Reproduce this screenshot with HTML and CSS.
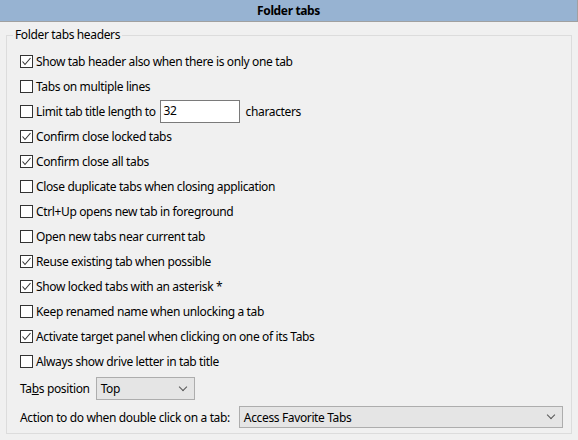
FILE: index.html
```html
<!DOCTYPE html>
<html>
<head>
<meta charset="utf-8">
<link rel="stylesheet" href="styles.css">
</head>
<body>
<div class="header">Folder tabs</div>
<div class="group">
  <div class="legend">Folder tabs headers</div>
  <div class="row"><span class="cb"><svg viewBox="0 0 11 11"><polyline points="1.5,5.5 4,8.5 9.5,2"/></svg></span><span>Show tab header also when there is only one tab</span></div>
  <div class="row"><span class="cb"></span><span>Tabs on multiple lines</span></div>
  <div class="row"><span class="cb"></span><span>Limit tab title length to</span><span class="edit">32</span><span class="chars">characters</span></div>
  <div class="row"><span class="cb"><svg viewBox="0 0 11 11"><polyline points="1.5,5.5 4,8.5 9.5,2"/></svg></span><span>Confirm close locked tabs</span></div>
  <div class="row"><span class="cb"><svg viewBox="0 0 11 11"><polyline points="1.5,5.5 4,8.5 9.5,2"/></svg></span><span>Confirm close all tabs</span></div>
  <div class="row"><span class="cb"></span><span>Close duplicate tabs when closing application</span></div>
  <div class="row"><span class="cb"></span><span>Ctrl+Up opens new tab in foreground</span></div>
  <div class="row"><span class="cb"></span><span>Open new tabs near current tab</span></div>
  <div class="row"><span class="cb"><svg viewBox="0 0 11 11"><polyline points="1.5,5.5 4,8.5 9.5,2"/></svg></span><span>Reuse existing tab when possible</span></div>
  <div class="row"><span class="cb"><svg viewBox="0 0 11 11"><polyline points="1.5,5.5 4,8.5 9.5,2"/></svg></span><span>Show locked tabs with an asterisk *</span></div>
  <div class="row"><span class="cb"></span><span>Keep renamed name when unlocking a tab</span></div>
  <div class="row"><span class="cb"><svg viewBox="0 0 11 11"><polyline points="1.5,5.5 4,8.5 9.5,2"/></svg></span><span>Activate target panel when clicking on one of its Tabs</span></div>
  <div class="row"><span class="cb"></span><span>Always show drive letter in tab title</span></div>
  <div class="row pos"><span class="lbl">Ta<u>b</u>s position</span><span class="combo small"><span>Top</span><span class="chev"></span></span></div>
  <div class="row act"><span class="lbl">Action to do when double click on a tab:</span><span class="combo wide"><span>Access Favorite Tabs</span><span class="chev"></span></span></div>
</div>
</body>
</html>
```
FILE: styles.css
```css
* { box-sizing: border-box; }
html, body { margin: 0; padding: 0; }
body {
  width: 578px;
  height: 440px;
  background: #f0f0f0;
  font-family: "Noto Sans", "Open Sans", sans-serif;
  font-size: 12px;
  letter-spacing: -0.36px;
  color: #000;
  overflow: hidden;
}
.header {
  height: 22px;
  background: #97b3d2;
  border-bottom: 1px solid #a0a0a0;
  border-right: 1px solid #a0a0a0;
  text-align: center;
  font-weight: bold;
  line-height: 21px;
  color: #000;
}
.group {
  position: relative;
  margin: 13px 6px 0 6px;
  height: 399px;
  border: 1px solid #dcdcdc;
  padding: 13px 7px 0 13px;
  display: flex;
  flex-direction: column;
}
.legend {
  position: absolute;
  top: -9px;
  left: 6px;
  padding: 0 2px;
  background: #f0f0f0;
  line-height: 16px;
}
.row {
  height: 25px;
  display: flex;
  align-items: center;
  white-space: nowrap;
}
.cb {
  width: 13px;
  height: 13px;
  border: 1px solid #333;
  background: #fff;
  margin-right: 3px;
  flex: none;
  display: flex;
}
.cb svg {
  width: 11px;
  height: 11px;
  fill: none;
  stroke: #333;
  stroke-width: 1.1;
}
.edit {
  width: 80px;
  height: 23px;
  border: 1px solid #7a7a7a;
  background: #fff;
  margin-left: 4px;
  padding-left: 3px;
  line-height: 20px;
}
.chars { margin-left: 6px; }
.pos { height: 23px; margin-top: 3px; }
.act { height: 22px; margin-top: 6px; }
.combo {
  height: 100%;
  border: 1px solid #adadad;
  background: #e5e5e5;
  display: flex;
  align-items: center;
  justify-content: space-between;
  padding: 0 8px 0 4px;
}
.small { width: 99px; margin-left: 6px; }
.wide { width: 324px; margin-left: 9px; }
.chev {
  width: 6px;
  height: 6px;
  border-right: 1px solid #555;
  border-bottom: 1px solid #555;
  transform: rotate(45deg);
  margin-top: -4px;
}
```
